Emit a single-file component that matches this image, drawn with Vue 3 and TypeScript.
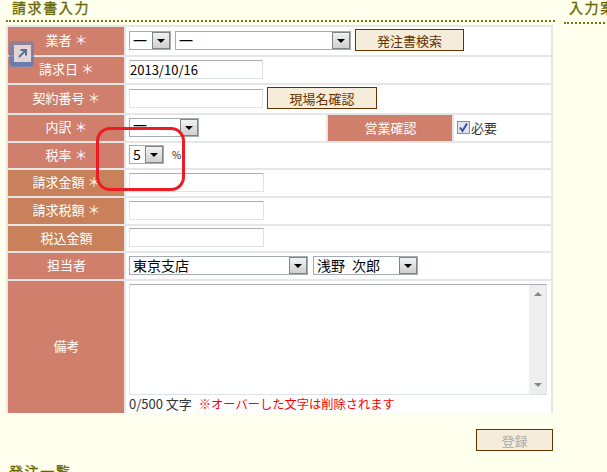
<script setup lang="ts">
interface Row {
  label: string;
  tone: 'red' | 'brown';
  height: number;
}

const rows: Row[] = [
  { label: '業者 ＊', tone: 'red', height: 28 },
  { label: '請求日 ＊', tone: 'red', height: 26 },
  { label: '契約番号 ＊', tone: 'red', height: 28 },
  { label: '内訳 ＊', tone: 'red', height: 26 },
  { label: '税率 ＊', tone: 'red', height: 25 },
  { label: '請求金額 ＊', tone: 'brown', height: 26 },
  { label: '請求税額 ＊', tone: 'brown', height: 26 },
  { label: '税込金額', tone: 'brown', height: 25 },
  { label: '担当者', tone: 'red', height: 26 },
  { label: '備考', tone: 'red', height: 132 },
];
</script>

<template>
  <div class="page">
    <div class="columns">
      <main class="left">
        <h2 class="heading">請求書入力</h2>
        <div class="form">
          <div v-for="(row, i) in rows" :key="row.label" class="row" :style="{ height: row.height + 'px' }">
            <div class="label" :class="row.tone">{{ row.label }}</div>
            <div class="value">
              <template v-if="i === 0">
                <span class="select" style="width: 42px"><span class="txt">一</span><span class="arrow" /></span>
                <span class="select" style="width: 176px"><span class="txt">一</span><span class="arrow" /></span>
                <button class="btn" style="width: 109px">発注書検索</button>
              </template>
              <template v-else-if="i === 1">
                <span class="input date">2013/10/16</span>
              </template>
              <template v-else-if="i === 2">
                <span class="input" />
                <button class="btn" style="width: 110px">現場名確認</button>
              </template>
              <template v-else-if="i === 3">
                <span class="select" style="width: 70px"><span class="txt raised">一</span><span class="arrow" /></span>
                <div class="label red sub">営業確認</div>
                <label class="check"><span class="box"><svg width="11" height="11" viewBox="0 0 11 11"><path d="M2 5.5 L4.5 9 L9 1.5" fill="none" stroke="#3b4f9f" stroke-width="2" /></svg></span>必要</label>
              </template>
              <template v-else-if="i === 4">
                <span class="select" style="width: 35px"><span class="txt">5</span><span class="arrow" /></span>
                <span class="pct">%</span>
              </template>
              <template v-else-if="i === 5 || i === 6 || i === 7">
                <span class="input wide" />
              </template>
              <template v-else-if="i === 8">
                <span class="select" style="width: 179px"><span class="txt">東京支店</span><span class="arrow" /></span>
                <span class="select" style="width: 105px; margin-left: 1px"><span class="txt">浅野&ensp;次郎</span><span class="arrow" /></span>
              </template>
              <template v-else>
                <div class="memo">
                  <div class="area">
                    <div class="scroll"><i class="up" /><i class="down" /></div>
                  </div>
                  <div class="count">0/500 文字 <span class="warn">※オーバーした文字は削除されます</span></div>
                </div>
              </template>
            </div>
          </div>
        </div>
        <div class="actions"><button class="btn submit">登録</button></div>
        <h2 class="heading next">発注一覧</h2>
      </main>
      <aside class="right">
        <h2 class="heading side">入力案内</h2>
      </aside>
    </div>

    <!-- overlays from the screenshot -->
    <div class="shortcut">
      <svg width="17" height="17" viewBox="0 0 17 17">
        <path d="M5 12 L11 6 M6.5 5 H12 V10.5" fill="none" stroke="#5a6f96" stroke-width="2" />
      </svg>
    </div>
    <div class="callout" />
  </div>
</template>

<style scoped>
.page {
  position: relative;
  width: 607px;
  height: 472px;
  overflow: hidden;
  background: #ffffee;
  font-family: "Noto Sans CJK JP", "Liberation Sans", sans-serif;
  font-size: 13px;
  color: #333;
}
.columns {
  display: flex;
  gap: 9px;
  padding-left: 6px;
}
.left {
  width: 549px;
  flex: none;
}
.heading {
  margin: 0;
  height: 20px;
  padding-left: 6px;
  font-size: 14px;
  font-weight: 400;
  line-height: 15px;
  letter-spacing: 1.6px;
  color: #666600;
  border-bottom: 2px dotted #777711;
  box-sizing: content-box;
  -webkit-text-stroke: 0.3px #666600;
  white-space: nowrap;
}
.form {
  margin-top: 3px;
  width: 547px;
  padding: 2px 2px 0;
  box-sizing: border-box;
  background: #e6e6e6;
}
.row {
  display: flex;
  gap: 2px;
  margin-bottom: 2px;
}
.label {
  flex: none;
  width: 116px;
  box-sizing: border-box;
  padding: 0 0 3px 1px;
  display: flex;
  align-items: center;
  justify-content: center;
  color: #fff;
  font-size: 13px;
}
.red {
  background: url("data:image/svg+xml,%3Csvg xmlns='http://www.w3.org/2000/svg' width='2' height='2' shape-rendering='crispEdges'%3E%3Crect width='2' height='2' fill='%23d2826e'/%3E%3Crect width='1' height='1' fill='%23de7464'/%3E%3Crect x='1' y='1' width='1' height='1' fill='%23de7464'/%3E%3C/svg%3E");
}
.brown {
  background: url("data:image/svg+xml,%3Csvg xmlns='http://www.w3.org/2000/svg' width='2' height='2' shape-rendering='crispEdges'%3E%3Crect width='2' height='2' fill='%23bc8762'/%3E%3Crect width='1' height='1' fill='%23c67f58'/%3E%3Crect x='1' y='1' width='1' height='1' fill='%23c67f58'/%3E%3C/svg%3E");
}
.value {
  flex: 1;
  display: flex;
  align-items: center;
  gap: 4px;
  box-sizing: border-box;
  padding: 0 0 2px 3px;
  background: #fff;
}
.select {
  box-sizing: border-box;
  height: 19px;
  display: flex;
  align-items: center;
  border: 1px solid #a5acb2;
  background: #fff;
  color: #000;
  font-size: 14px;
}
.txt {
  flex: 1;
  padding: 0 0 1px 3px;
  white-space: nowrap;
  overflow: hidden;
  line-height: 16px;
}
.raised {
  padding-bottom: 4px;
  line-height: 13px;
}
.arrow {
  position: relative;
  flex: none;
  width: 18px;
  height: 17px;
  box-sizing: border-box;
  border: 1px solid #7f8487;
  background: linear-gradient(#f2f2f2, #cfcfcf);
}
.arrow::after {
  content: "";
  position: absolute;
  left: 4px;
  top: 6px;
  border: 4px solid transparent;
  border-top-color: #000;
  border-bottom-width: 0;
}
.input {
  box-sizing: border-box;
  width: 134px;
  height: 19px;
  border: 1px solid #dde1e8;
  border-top-color: #abadb3;
  background: #fff;
  color: #000;
  line-height: 17px;
  border-radius: 1px;
}
.wide {
  width: 135px;
}
.btn {
  box-sizing: border-box;
  height: 22px;
  padding: 0;
  border: 1px solid #663300;
  background: #f5ecd9;
  color: #663300;
  font: inherit;
}
.submit {
  width: 77px;
  color: #aaa;
}
.sub {
  width: 128px;
  height: calc(100% + 2px);
  margin: 0 0 -2px 123px;
  padding-bottom: 2px;
  border: solid #e6e6e6;
  border-width: 0 2px;
}
.check {
  display: flex;
  align-items: center;
  gap: 1px;
  margin-left: -1px;
}
.box {
  box-sizing: border-box;
  width: 13px;
  height: 13px;
  border: 1px solid #8e8f8f;
  background: #dfe3ee;
}
.box svg {
  display: block;
}
.pct {
  margin-left: 4px;
  font-size: 10px;
  color: #222;
}
.memo {
  flex: 1;
  align-self: flex-start;
  padding-top: 3px;
}
.area {
  position: relative;
  box-sizing: border-box;
  width: 418px;
  height: 111px;
  border: 1px solid #dde1e8;
  border-top-color: #abadb3;
  border-radius: 1px;
}
.scroll {
  position: absolute;
  right: 0;
  top: 0;
  bottom: 0;
  width: 17px;
  background: #eee;
}
.up, .down {
  position: absolute;
  left: 5px;
  border: 4px solid transparent;
}
.up {
  top: 7px;
  border-bottom-color: #888;
  border-top-width: 0;
}
.down {
  bottom: 7px;
  border-top-color: #888;
  border-bottom-width: 0;
}
.count {
  font-size: 13px;
  line-height: 17px;
  white-space: nowrap;
}
.warn {
  margin-left: 4px;
  color: #f00;
  font-size: 12.25px;
}
.actions {
  display: flex;
  justify-content: flex-end;
  width: 547px;
  margin-top: 16px;
}
.next {
  margin-top: 13px;
  padding-left: 3px;
  border: 0;
}
.right {
  flex: none;
  width: 60px;
}
.side {
  height: 22px;
  padding-left: 5px;
  overflow: hidden;
}
.shortcut {
  position: absolute;
  left: 9px;
  top: 41px;
  width: 25px;
  height: 26px;
  box-sizing: border-box;
  padding: 3px 0 0 4px;
  border: 1px solid #7d88a8;
  border-radius: 3px;
  background: linear-gradient(rgba(125, 130, 165, 0.75), rgba(80, 125, 190, 0.85));
}
.shortcut svg {
  display: block;
  background: rgba(255, 232, 222, 0.8);
}
.callout {
  position: absolute;
  left: 96px;
  top: 127px;
  width: 89px;
  height: 64px;
  box-sizing: border-box;
  border: 3px solid #ed1c24;
  border-radius: 14px;
}
</style>
